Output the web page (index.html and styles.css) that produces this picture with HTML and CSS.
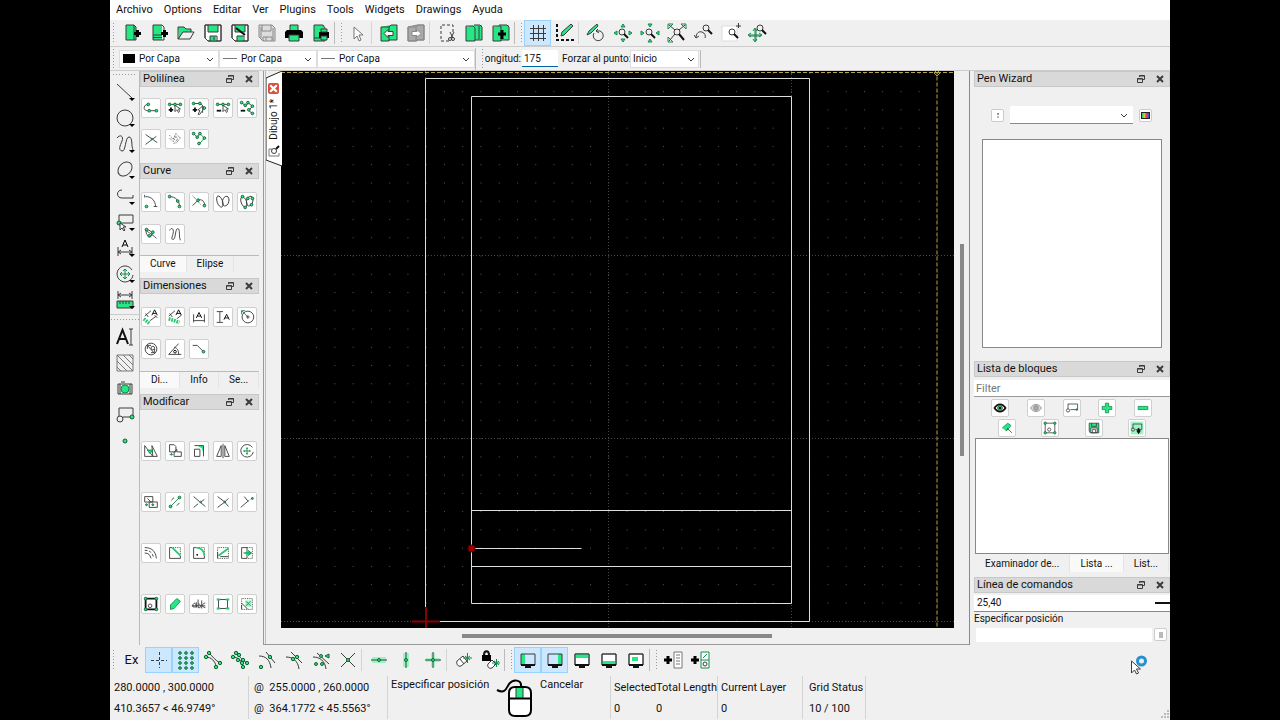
FILE: index.html
```html
<!DOCTYPE html>
<html lang="es">
<head>
<meta charset="utf-8">
<title>LibreCAD - Dibujo 1</title>
<link rel="stylesheet" href="styles.css">
</head>
<body>
<svg class="defs" aria-hidden="true">
  <symbol id="restore" viewBox="0 0 10 10"><path d="M3.500 3V1.500h5v4H7M3.500 2h5"/><path d="M1.500 4.500h5v4h-5zM1.500 5h5"/></symbol>
  <symbol id="close" viewBox="0 0 10 10"><path class="x" d="M2 2l6 6M8 2L2 8"/></symbol>
  <symbol id="chevron" viewBox="0 0 10 10"><path d="M2 4l3 3 3-3"/></symbol>
  <symbol id="monitor" viewBox="0 0 20 20"><path d="M3 4h14v11H3z"/><path class="b" d="M3 15h14M7 17h6"/></symbol>
</svg>
<div class="app">
  <nav class="menubar">
    <button>Archivo</button><button>Options</button><button>Editar</button><button>Ver</button><button>Plugins</button><button>Tools</button><button>Widgets</button><button>Drawings</button><button>Ayuda</button>
  </nav>

  <div class="toolbar">
    <span class="handle"></span>
    <button aria-label="Nuevo"><svg viewBox="0 0 20 20"><path class="g" d="M4 2h8l2 2v13H4z"/><path d="M4 2h8l2 2v13H4zM12 2v15"/><path class="bb" d="M12 10.500h7M15.500 7v7"/></svg></button>
    <button aria-label="Nuevo desde plantilla"><svg viewBox="0 0 20 20"><path class="g" d="M4 2h9v15H4z"/><path d="M4 2h9l2 2v13H4zM4 12h9M4 14.500h9"/><path class="bb" d="M12 10.500h7M15.500 7v7"/></svg></button>
    <button aria-label="Abrir"><svg viewBox="0 0 20 20"><path class="g" d="M2 4h6l2 2h5v3H7l-4 7z"/><path d="M2 16V4h6l2 2h5v3M2 16l5-7h11l-4 7z"/></svg></button>
    <button aria-label="Guardar"><svg viewBox="0 0 20 20"><path class="w" d="M2 2h16v16H5l-3-3z"/><path class="g" d="M5 2h10v7H5zM7 13h6v5H7z"/><path d="M2 2h16v16H5l-3-3zM5 2v7h10V2M7 18v-5h7v5M11 14v3"/></svg></button>
    <button aria-label="Guardar como"><svg viewBox="0 0 20 20"><path class="w" d="M2 2h16v16H5l-3-3z"/><path class="g" d="M5 2h10v7H5zM7 13h6v5H7z"/><path d="M2 2h16v16H5l-3-3zM5 2v7h10V2M7 18v-5h7v5"/><path class="b" d="M6 5l9 7"/></svg></button>
    <button aria-label="Guardar todo"><svg class="dim" viewBox="0 0 20 20"><path class="pale" d="M2 2h13l3 3v13H6l-4-4z"/><path d="M5 2v6h9V2M6 18v-4h9v4M4 4v11M16 5v12M9 14v4"/></svg></button>
    <button aria-label="Imprimir"><svg viewBox="0 0 20 20"><path class="g" d="M6 2h8v6H6z"/><path d="M6 2h8v6H6z"/><path class="k" d="M3 7h14l2 2v6H1V9z"/><path class="g" d="M5 12h10v6H5z"/><path d="M5 12h10v6H5z"/></svg></button>
    <button aria-label="Vista previa de impresión"><svg viewBox="0 0 20 20"><path class="g" d="M3 2h10v16H3z"/><path d="M3 2h9l2 3v13H3zM3 15h7"/><path class="k" d="M8 9h10v6H8z"/><path class="g" d="M10 6h6v3h-6zM10 13h6v4h-6z"/><path d="M10 6h6v3h-6zM10 13h6v4h-6z"/></svg></button>
    <span class="handle split"></span>
    <button aria-label="Seleccionar"><svg viewBox="0 0 20 20"><path class="w mid" d="M6 4v12l3-3 2 5 2-1-2-5h4z"/></svg></button>
    <span class="sep"></span>
    <button aria-label="Deshacer"><svg viewBox="0 0 20 20"><path class="g" d="M2 4l9-2h7v15h-7v1H2z"/><path d="M2 4h8v14H2zM10 4l2-2h6v15h-8"/><path class="w" d="M5 10.500l4-4v2h5v4H9v2z"/></svg></button>
    <button aria-label="Rehacer"><svg class="dim" viewBox="0 0 20 20"><path class="gray" d="M2 4l9-2h7v15h-7v1H2z"/><path d="M2 4h8v14H2zM10 4l2-2h6v15h-8"/><path class="w" d="M15 10.500l-4-4v2H6v4h5v2z"/></svg></button>
    <span class="sep"></span>
    <button aria-label="Cortar"><svg viewBox="0 0 20 20"><path class="dash" d="M16 9V2H4v16h8"/><path d="M13 9l3 6M17 9l-3 6"/><circle cx="13" cy="16" r="1.500"/><circle cx="16" cy="16" r="1.500"/></svg></button>
    <button aria-label="Copiar"><svg viewBox="0 0 20 20"><path class="g" d="M2 4l9-2h7v15h-7v1H2z"/><path d="M2 3h7l2 2v13H2zM11 17h7V4l-2-2h-6M15 3v13"/></svg></button>
    <button aria-label="Pegar"><svg viewBox="0 0 20 20"><path class="g" d="M2 4l9-2h7v15h-7v1H2z"/><path d="M2 3h8v15H2zM10 17h8V4l-2-2H8"/><path class="bb" d="M7 11h8M11 7v9"/></svg></button>
    <span class="handle split"></span>
    <button class="on" aria-label="Rejilla"><svg viewBox="0 0 20 20"><path d="M2 5.500h16M2 10.500h16M2 15.500h16M5.500 2v16M10.500 2v16M15.500 2v16"/></svg></button>
    <button aria-label="Modo borrador"><svg viewBox="0 0 20 20"><path class="dash b" d="M2 1v16h17"/><path class="g" d="M6 13l1-4 9-8 2 2-9 9z"/><path d="M6 13l1-4 9-8 2 2-9 9z"/></svg></button>
    <span class="sep"></span>
    <button aria-label="Redibujar"><svg viewBox="0 0 20 20"><path class="g" d="M1 12l2-4 8-7 1 2-7 7z"/><path d="M1 12l2-4 8-7 1 2-7 7zM8 10a5 5 0 1 0 6-2h-4l2-2M10 8l3 2"/></svg></button>
    <button aria-label="Acercar"><svg viewBox="0 0 20 20"><path class="g" d="M8 4l2-3 2 3zM8 16l2 3 2-3zM4 8l-3 2 3 2zM16 8l3 2-3 2z"/><path class="gs" d="M8 4l2-3 2 3zM8 16l2 3 2-3zM4 8l-3 2 3 2zM16 8l3 2-3 2z"/><circle cx="9" cy="9" r="3"/><path class="b" d="M11 11l4 4"/></svg></button>
    <button aria-label="Alejar"><svg viewBox="0 0 20 20"><path class="g" d="M8 1l2 3 2-3zM8 19l2-3 2 3zM1 8l3 2-3 2zM19 8l-3 2 3 2z"/><path class="gs" d="M8 1l2 3 2-3zM8 19l2-3 2 3zM1 8l3 2-3 2zM19 8l-3 2 3 2z"/><circle cx="9" cy="9" r="3"/><path class="b" d="M11 11l4 4"/></svg></button>
    <button aria-label="Zoom automático"><svg viewBox="0 0 20 20"><path class="gs" d="M1 6V1h5zM14 1h5v5zM1 14v5h5z"/><circle cx="10" cy="9" r="3"/><path d="M2 2l6 5M18 2l-6 5M2 18l6-7"/><path class="b" d="M12 11l5 6"/></svg></button>
    <button aria-label="Vista anterior"><svg viewBox="0 0 20 20"><circle cx="12" cy="5" r="3"/><path class="b" d="M14 7l4 4"/><path d="M2 15c0-5 3-7 6-6s4 4 3 6M0 12l2 3 3-2"/></svg></button>
    <button aria-label="Zoom ventana"><svg viewBox="0 0 20 20"><path class="w soft" d="M1 3h15v15H1z"/><circle cx="11" cy="9" r="3"/><path class="b" d="M13 11l4 4"/><path d="M15 3h5M17.500 0v5"/></svg></button>
    <button aria-label="Desplazar"><svg viewBox="0 0 20 20"><path class="gs" d="M7 6v12M1 12h12M5 8l2-3 2 3M5 16l2 3 2-3M3 10l-3 2 3 2M11 10l3 2-3 2M8 6v12M1 13h12"/><circle cx="12" cy="5" r="3"/><path class="b" d="M14 7l4 4"/></svg></button>
  </div>

  <div class="toolbar pens">
    <span class="handle"></span>
    <label class="combo color"><span class="swatch"></span><select aria-label="Color"><option>Por Capa</option></select><svg class="chev"><use href="#chevron"/></svg></label>
    <label class="combo width"><span class="line"></span><select aria-label="Ancho"><option>Por Capa</option></select><svg class="chev"><use href="#chevron"/></svg></label>
    <label class="combo type"><span class="line"></span><select aria-label="Tipo de línea"><option>Por Capa</option></select><svg class="chev"><use href="#chevron"/></svg></label>
    <span class="handle split"></span>
    <label class="clip" for="len"><span>Longitud:</span></label>
    <input id="len" class="len" type="text" value="175">
    <label class="snaplabel" for="snap">Forzar al punto:</label>
    <span class="combo snap"><select id="snap"><option>Inicio</option></select><svg class="chev"><use href="#chevron"/></svg></span>
    <span class="end"></span>
  </div>

  <main class="work">
    <div class="tools">
      <span class="grip"></span>
      <button class="more" aria-label="Línea"><svg viewBox="0 0 20 20"><path d="M2 2l15 14"/></svg></button>
      <button class="more" aria-label="Círculo"><svg viewBox="0 0 20 20"><circle cx="10" cy="10" r="8"/></svg></button>
      <button class="more" aria-label="Curva"><svg viewBox="0 0 20 20"><path d="M2 4c3-4 7-2 5 3s-4 9 0 10 3-14 7-14 2 9 4 13"/></svg></button>
      <button class="more" aria-label="Elipse"><svg viewBox="0 0 20 20"><ellipse cx="10" cy="9" rx="8" ry="6" transform="rotate(-45 10 9)"/></svg></button>
      <button class="more" aria-label="Polilínea"><svg viewBox="0 0 20 20"><path d="M7 4C1 4 1 12 7 12h11V9"/></svg></button>
      <button class="more" aria-label="Selección"><svg viewBox="0 0 20 20"><path d="M4 3h14v8H4z"/><circle class="n" cx="4" cy="11" r="2"/><path class="w" d="M5 11v7l2-2 2 3 1-1-2-3h3z"/></svg></button>
      <button class="more" aria-label="Acotar"><svg viewBox="0 0 20 20"><path d="M3 9v9M17 9v9M3 14h14M6 12l-3 2 3 2M14 12l3 2-3 2"/><path class="a" d="M7 9l3-7 3 7M8 7h4"/></svg></button>
      <button class="more" aria-label="Modificar"><svg viewBox="0 0 20 20"><path d="M17 6a8 8 0 1 0 1 5"/><path class="gs" d="M10 5v10M5 10h10M8 7l2-2 2 2M8 13l2 2 2-2M7 8l-2 2 2 2M13 8l2 2-2 2"/></svg></button>
      <button class="more" aria-label="Medir"><svg viewBox="0 0 20 20"><path d="M3 1v8M17 1v8M3 5h14M6 3L3 5l3 2M14 3l3 2-3 2"/><path class="g" d="M2 11h16v7H2z"/><path d="M2 11h16v7H2zM5 11v3M8 11v3M11 11v3M14 11v3"/></svg></button>
      <span class="grip cut"></span>
      <button aria-label="Texto"><svg viewBox="0 0 20 20"><path class="b" d="M2 17L7.500 3 13 17M4 12h7"/><path d="M14 2h4M16 2v16M14 18h4"/></svg></button>
      <button aria-label="Sombreado"><svg viewBox="0 0 20 20"><path class="mid" d="M2 2h16v16H2zM2 2l16 16M2 8l10 10M2 14l4 4M8 2l10 10M14 2l4 4"/></svg></button>
      <button aria-label="Imagen"><svg viewBox="0 0 20 20"><path d="M3 5h14v10H3zM5 5v10M15 5v10M6 3h4"/><circle class="g" cx="10" cy="10" r="4"/><circle class="gs" cx="10" cy="10" r="4"/></svg></button>
      <button aria-label="Bloque"><svg viewBox="0 0 20 20"><path d="M4 11V3h14v9H8"/><circle cx="5" cy="14" r="3"/><circle class="n" cx="17" cy="12" r="2"/></svg></button>
      <button aria-label="Punto"><svg viewBox="0 0 20 20"><circle class="n" cx="10" cy="10" r="2"/></svg></button>
    </div>

    <aside class="dock left">
      <section class="poly">
        <header><h2>Polilínea</h2><button aria-label="Flotar"><svg><use href="#restore"/></svg></button><button aria-label="Cerrar"><svg><use href="#close"/></svg></button></header>
        <div class="pad">
          <button aria-label="Crear"><svg viewBox="0 0 20 20"><path d="M7 6c-6 0-6 7-1 7h9"/><circle class="n" cx="7" cy="6" r="1.500"/><circle class="n" cx="8" cy="13" r="1.500"/><circle class="n" cx="16" cy="13" r="1.500"/></svg></button>
          <button aria-label="Añadir nodo"><svg viewBox="0 0 20 20"><path d="M4 6h13"/><circle class="n" cx="4" cy="6" r="1.500"/><circle class="n" cx="10" cy="6" r="1.500"/><circle class="n" cx="16" cy="6" r="1.500"/><path class="b" d="M3 12h5M5.500 9.500v5"/><path class="w" d="M10 7v7l2-2 2 3 1-1-1-3h2z"/></svg></button>
          <button aria-label="Agregar nodo"><svg viewBox="0 0 20 20"><path d="M4 5h8l4 5-4 5"/><circle class="n" cx="4" cy="5" r="1.500"/><circle class="n" cx="11" cy="5" r="1.500"/><circle class="n" cx="16" cy="10" r="1.500"/><path class="b" d="M3 12h5M5.500 9.500v5"/><path class="w" d="M14 8l-5 4 2 1-2 4h2l2-3 1 1z"/></svg></button>
          <button aria-label="Borrar nodo"><svg viewBox="0 0 20 20"><path d="M4 6h13"/><circle class="n" cx="4" cy="6" r="1.500"/><circle class="n" cx="10" cy="6" r="1.500"/><circle class="n" cx="16" cy="6" r="1.500"/><path class="b" d="M3 13h5"/><path class="w" d="M10 7v7l2-2 2 3 1-1-1-3h2z"/></svg></button>
          <button aria-label="Borrar entre nodos"><svg viewBox="0 0 20 20"><path d="M4 4l5 4 2-4 5 4-4 5 4 3"/><circle class="n" cx="4" cy="4" r="1.500"/><circle class="n" cx="8" cy="7" r="1.500"/><circle class="n" cx="11" cy="4" r="1.500"/><circle class="n" cx="16" cy="8" r="1.500"/><circle class="n" cx="12" cy="12" r="1.500"/><circle class="n" cx="16" cy="16" r="1.500"/><path class="b" d="M3 13h5"/></svg></button>
          <button aria-label="Recortar segmentos"><svg viewBox="0 0 20 20"><path d="M4 5l13 9M4 16l12-9"/><circle class="gs" cx="11" cy="10" r="1"/></svg></button>
          <button aria-label="Equidistante"><svg viewBox="0 0 20 20"><path class="dot" d="M4 6l4 4 3-6 5 5-5 6M4 9l4 4 3-6 2 3-5 6"/></svg></button>
          <button aria-label="Desde segmentos"><svg viewBox="0 0 20 20"><path class="gs" d="M4 4l4 4 3-4 5 5-6 7"/><circle class="n" cx="4" cy="4" r="1.500"/><circle class="n" cx="8" cy="8" r="1.500"/><circle class="n" cx="11" cy="4" r="1.500"/><circle class="n" cx="16" cy="9" r="1.500"/><circle class="n" cx="10" cy="15" r="1.500"/></svg></button>
        </div>
      </section>
      <section class="curve">
        <header><h2>Curve</h2><button aria-label="Flotar"><svg><use href="#restore"/></svg></button><button aria-label="Cerrar"><svg><use href="#close"/></svg></button></header>
        <div class="pad">
          <button aria-label="Arco"><svg viewBox="0 0 20 20"><path d="M4 4c7 0 11 5 11 11M13 15h4M3 2v3"/><circle class="n" cx="5" cy="15" r="1.500"/></svg></button>
          <button aria-label="Arco 3 puntos"><svg viewBox="0 0 20 20"><path d="M4 4c7 0 11 5 11 11"/><circle class="n" cx="4" cy="4" r="1.500"/><circle class="n" cx="13" cy="9" r="1.500"/><circle class="n" cx="15" cy="15" r="1.500"/></svg></button>
          <button aria-label="Arco tangencial"><svg viewBox="0 0 20 20"><path d="M3 14l6-6c4-2 8 2 7 6"/><path class="dot" d="M3 3l9 10"/><circle class="n" cx="9" cy="8" r="1.500"/><circle class="n" cx="16" cy="14" r="1.500"/></svg></button>
          <button aria-label="Spline"><svg viewBox="0 0 20 20"><ellipse cx="6.500" cy="9.500" rx="3" ry="6.500" transform="rotate(-20 6.500 9.500)"/><ellipse cx="13" cy="9" rx="3.500" ry="5.500" transform="rotate(15 13 9)"/></svg></button>
          <button aria-label="Spline por puntos"><svg viewBox="0 0 20 20"><ellipse cx="6.500" cy="10" rx="3" ry="6" transform="rotate(-20 6.500 10)"/><ellipse cx="13" cy="9" rx="3.500" ry="5.500" transform="rotate(15 13 9)"/><circle class="n" cx="5" cy="4" r="1.500"/><circle class="n" cx="11" cy="6" r="1.500"/><circle class="n" cx="16" cy="6" r="1.500"/><circle class="n" cx="15" cy="13" r="1.500"/><circle class="n" cx="8" cy="16" r="1.500"/></svg></button>
          <button aria-label="Mano alzada"><svg viewBox="0 0 20 20"><path d="M4 5c1 9 6 10 7 6s-4-6-7-6 8 5 12 10"/><circle class="n" cx="5" cy="5" r="1.500"/><circle class="n" cx="12" cy="8" r="1.500"/><circle class="n" cx="8" cy="12" r="1.500"/></svg></button>
          <button aria-label="Línea libre"><svg viewBox="0 0 20 20"><path d="M4 6c2-4 5-2 4 3s-3 7 0 7 2-12 5-12 1 9 3 13"/></svg></button>
        </div>
        <div class="tabs"><button class="sel">Curve</button><button>Elipse</button></div>
      </section>
      <section class="dims">
        <header><h2>Dimensiones</h2><button aria-label="Flotar"><svg><use href="#restore"/></svg></button><button aria-label="Cerrar"><svg><use href="#close"/></svg></button></header>
        <div class="pad">
          <button aria-label="Alineada"><svg viewBox="0 0 20 20"><path class="ruler" d="M2 12l6 5"/><path d="M3 9l7-6M4 6l3 4M9 14l7-5M14 8l3 3"/><path class="a" d="M11 8l3-6 3 6M12 6h4"/></svg></button>
          <button aria-label="Lineal"><svg viewBox="0 0 20 20"><path class="ruler" d="M3 12l12 4"/><path d="M3 9l7-6M4 6l3 4M12 12l5-4"/><path class="a" d="M11 8l3-6 3 6M12 6h4"/></svg></button>
          <button aria-label="Horizontal"><svg viewBox="0 0 20 20"><path d="M4 7v9M16 7v9M4 14h12"/><path class="a" d="M7 11l3-6 3 6M8 9h4"/></svg></button>
          <button aria-label="Vertical"><svg viewBox="0 0 20 20"><path d="M3 4h7M3 16h7M6.500 4v12"/><path class="a" d="M11 13l3-6 3 6M12 11h4"/></svg></button>
          <button aria-label="Radial"><svg viewBox="0 0 20 20"><circle cx="11" cy="10" r="6.500"/><path class="gs" d="M4 3l7 7M4 7V3h4"/><path d="M11 8v4M9 10h4"/></svg></button>
          <button aria-label="Diametral"><svg viewBox="0 0 20 20"><circle cx="10" cy="10" r="6.500"/><path d="M6 6l8 9M6 10V6h4M10 14h4v-4"/><circle cx="12" cy="9" r="2"/></svg></button>
          <button aria-label="Angular"><svg viewBox="0 0 20 20"><path d="M3 16h14M3 16L14 4M9 8c4 1 5 4 5 8"/><circle class="a" cx="10" cy="13" r="1.500"/></svg></button>
          <button aria-label="Directriz"><svg viewBox="0 0 20 20"><path d="M3 6h5l7 7"/><circle class="n" cx="15" cy="13" r="1.500"/></svg></button>
        </div>
        <div class="tabs"><button class="sel">Di...</button><button>Info</button><button>Se...</button></div>
      </section>
      <section class="modify">
        <header><h2>Modificar</h2><button aria-label="Flotar"><svg><use href="#restore"/></svg></button><button aria-label="Cerrar"><svg><use href="#close"/></svg></button></header>
        <div class="pad">
          <button aria-label="Mover"><svg viewBox="0 0 20 20"><path d="M3 4v12h9zM11 4l6 12h-5z"/><path class="g" d="M6 9h6l-3 4z"/><path class="gs" d="M6 9h6l-3 4z"/></svg></button>
          <button aria-label="Copiar"><svg viewBox="0 0 20 20"><path d="M4 3h5l2 2v6H4zM9 15v-4l3-3v3h5v5H9z"/><path class="gs" d="M6 12v3M4 14h4"/></svg></button>
          <button aria-label="Escalar"><svg viewBox="0 0 20 20"><path class="g" d="M8 4h7v9l-2-6z"/><path d="M5 4h10v12M5 8h6v8H5z"/></svg></button>
          <button aria-label="Reflejar"><svg viewBox="0 0 20 20"><path d="M8 4v12H3zM12 4v12h5zM10 2v16"/></svg></button>
          <button aria-label="Girar"><svg viewBox="0 0 20 20"><path d="M16 6a7 7 0 1 0 1 5"/><path class="gs" d="M10 6v8M6 10h8M9 7h2M9 13h2M7 9v2M13 9v2"/></svg></button>
          <button aria-label="Mover y girar"><svg viewBox="0 0 20 20"><path d="M3 4h9v6H3zM8 10h9v6H8zM6 6l4 4"/><circle class="n" cx="5" cy="13" r="1"/><circle class="n" cx="12" cy="13" r="1"/></svg></button>
          <button aria-label="Girar dos"><svg viewBox="0 0 20 20"><path class="gs" d="M5 15l10-10"/><circle class="n" cx="5" cy="15" r="1.500"/><circle class="n" cx="15" cy="5" r="1.500"/><path d="M6 8l3-3M12 14l3-3"/></svg></button>
          <button aria-label="Recortar"><svg viewBox="0 0 20 20"><path d="M4 4l13 11M4 16l5-4M11 11l5-4"/><circle class="gs" cx="12" cy="10" r="1"/></svg></button>
          <button aria-label="Recortar dos"><svg viewBox="0 0 20 20"><path d="M4 4l8 6M4 16l8-6M12 10l4-4M12 10l4 5"/><circle class="n" cx="12" cy="10" r="1"/></svg></button>
          <button aria-label="Alargar"><svg viewBox="0 0 20 20"><path d="M3 16l7-6M7 4l4 5"/><path class="dash" d="M10 10l7-5"/><circle class="n" cx="16" cy="6" r="1"/></svg></button>
          <button aria-label="Desfase"><svg viewBox="0 0 20 20"><path d="M3 4c8 0 12 4 13 12M3 10c4 0 6 2 7 6"/><path class="dash" d="M3 7c6 0 9 3 10 9"/></svg></button>
          <button aria-label="Bisel"><svg viewBox="0 0 20 20"><path d="M4 4v12h12v-3M4 4h3"/><path class="dot" d="M8 4h8v8"/><path class="thick" d="M7 4l9 9"/></svg></button>
          <button aria-label="Redondeo"><svg viewBox="0 0 20 20"><path d="M4 4v12h12v-3M4 4h3"/><path class="dot" d="M8 4h8v8"/><path class="thick" d="M7 4c5 0 9 4 9 9"/><circle class="k" cx="8" cy="12" r="1"/></svg></button>
          <button aria-label="Dividir"><svg viewBox="0 0 20 20"><path class="dot" d="M4 16V4h12v12z"/><path class="thick" d="M5 13l4-3 7-5"/><path d="M4 16V9M7 14h9"/></svg></button>
          <button aria-label="Estirar"><svg viewBox="0 0 20 20"><path d="M10 4H4v12h6z"/><path class="dot" d="M10 4h6v12h-6"/><path class="g" d="M7 10l4-3 4 3-4 3z"/><path class="gs" d="M6 10h9M11 7l4 3-4 3"/></svg></button>
          <button aria-label="Propiedades"><svg viewBox="0 0 20 20"><path class="b" d="M4 4h12v12H4z"/><circle cx="9" cy="12" r="2"/><circle class="n" cx="4" cy="4" r="1.500"/><circle class="n" cx="16" cy="4" r="1.500"/><circle class="n" cx="4" cy="16" r="1.500"/><circle class="n" cx="16" cy="16" r="1.500"/></svg></button>
          <button aria-label="Atributos"><svg viewBox="0 0 20 20"><path class="g" d="M5 11l7-7 4 3-7 8-4 1z"/><path class="gs" d="M5 11l7-7 4 3-7 8-4 1z"/></svg></button>
          <button aria-label="Explotar texto"><svg viewBox="0 0 20 20"><path d="M3 13c0-5 4-5 4 0-3 1-4 0-4-1M7 8v6M9 5v9c4 1 4-4 0-4M17 9c-4 0-4 5 0 5M2 12h15M13 6v9"/></svg></button>
          <button aria-label="Explotar"><svg viewBox="0 0 20 20"><path d="M5 5h10v10H5z"/><path class="thick" d="M3 5h4M13 5h4M3 15h4M13 15h4"/></svg></button>
          <button aria-label="Borrar"><svg viewBox="0 0 20 20"><path class="gl" d="M8 6h7v7H8z"/><path class="dot" d="M4 4h12v12H4z"/><path class="gs" d="M9 7l5 5M14 7l-5 5"/><path d="M4 9l7 7M4 16v-5"/></svg></button>
        </div>
      </section>
    </aside>

    <div class="mdi">
      <div class="doctabs">
        <svg class="tabshape" viewBox="0 0 16 95"><path d="M16 0L0 7v82l16 6"/></svg>
        <button class="closetab" aria-label="Cerrar dibujo"><svg><use href="#close"/></svg></button>
        <span class="docname">Dibujo 1*</span>
        <svg class="docicon" viewBox="0 0 12 12"><path class="mid" d="M4 4H1v7h10V8"/><circle cx="6" cy="6" r="2.500"/><path class="b" d="M8 4l3-3"/></svg>
      </div>
      <div class="viewport">
        <svg class="canvas" viewBox="281 71 673 557" preserveAspectRatio="xMinYMin slice">
          <defs><pattern id="grid" x="425.700" y="72.900" width="18.260" height="18.260" patternUnits="userSpaceOnUse"><rect width="1" height="1"/></pattern></defs>
          <rect class="dots" x="281" y="71" width="673" height="557" fill="url(#grid)"/>
          <path class="major" d="M425.500 71v557M608.500 71v557M791.500 71v557M281 255.500h673M281 438.500h673M281 621.500h673"/>
          <path class="limit" d="M281 72.500h656v556M937 72.500h17"/>
          <path class="limit solid" d="M937 70l3 3-3 3-3-3z"/>
          <path class="ent" d="M425.500 78.500h384v543h-384zM471.500 96.500h320v507h-320zM471.500 510.500h320M471.500 566.500h320M471.500 548.500h110"/>
          <path class="origin" d="M412 621.500h28M426 607v21"/>
          <circle class="ref" cx="471.500" cy="548.500" r="3.500"/>
        </svg>
        <div class="vbar"><span></span></div>
        <div class="hbar"><span></span></div>
      </div>
    </div>

    <aside class="dock right">
      <section class="pen">
        <header><h2>Pen Wizard</h2><button aria-label="Flotar"><svg><use href="#restore"/></svg></button><button aria-label="Cerrar"><svg><use href="#close"/></svg></button></header>
        <div class="penrow">
          <button class="tiny" aria-label="Añadir color"><svg viewBox="0 0 10 10"><path class="mid" d="M4 4h2M5 3v2M4 7h2"/></svg></button>
          <span class="combo pencolor"><select aria-label="Color favorito"><option></option></select><svg class="chev"><use href="#chevron"/></svg></span>
          <button class="tiny" aria-label="Elegir color"><span class="rainbow"></span></button>
        </div>
        <div class="list"></div>
      </section>
      <section class="blocks">
        <header><h2>Lista de bloques</h2><button aria-label="Flotar"><svg><use href="#restore"/></svg></button><button aria-label="Cerrar"><svg><use href="#close"/></svg></button></header>
        <input class="filter" type="text" placeholder="Filter" aria-label="Filter">
        <div class="brow">
          <button aria-label="Mostrar todo"><svg viewBox="0 0 20 20"><path class="w b" d="M3 10c4-6 10-6 14 0-4 6-10 6-14 0z"/><circle class="g" cx="10" cy="10" r="3"/><circle cx="10" cy="10" r="3"/><circle class="k" cx="10" cy="10" r="1.500"/></svg></button>
          <button aria-label="Ocultar todo"><svg class="dim" viewBox="0 0 20 20"><path class="pale" d="M3 10c4-6 10-6 14 0-4 6-10 6-14 0z"/><circle class="gray" cx="10" cy="10" r="3"/></svg></button>
          <button aria-label="Crear bloque"><svg viewBox="0 0 20 20"><path d="M5 11V5h12v7H8"/><circle cx="5" cy="13" r="2"/><circle class="n" cx="16" cy="12" r="1"/></svg></button>
          <button aria-label="Añadir bloque"><svg viewBox="0 0 20 20"><path class="g" d="M8 4h4v4h4v4h-4v4H8v-4H4V8h4z"/><path class="gs" d="M8 4h4v4h4v4h-4v4H8v-4H4V8h4z"/></svg></button>
          <button aria-label="Quitar bloque"><svg viewBox="0 0 20 20"><path class="g" d="M4 8h12v4H4z"/><path class="gs" d="M4 8h12v4H4z"/></svg></button>
        </div>
        <div class="brow four">
          <button aria-label="Renombrar"><svg viewBox="0 0 20 20"><path class="g" d="M4 10l7-6 4 3-6 7z"/><path class="gs" d="M4 10l7-6 4 3-6 7"/><path d="M10 10l6 6M9 13l2-2"/></svg></button>
          <button aria-label="Editar bloque"><svg viewBox="0 0 20 20"><path d="M4 4h12v12H4z"/><circle cx="9" cy="12" r="2"/><circle class="n" cx="4" cy="4" r="1.500"/><circle class="n" cx="16" cy="4" r="1.500"/><circle class="n" cx="4" cy="16" r="1.500"/><circle class="n" cx="16" cy="16" r="1.500"/></svg></button>
          <button aria-label="Guardar bloque"><svg viewBox="0 0 20 20"><path class="g" d="M4 4h12v12H4z"/><path class="w" d="M6 10h8v6H6z"/><path d="M4 4h12v12H6l-2-2zM7 4v4h6V4M8 16v-4h4v4"/></svg></button>
          <button aria-label="Insertar bloque"><svg viewBox="0 0 20 20"><path class="gl" d="M2 2h16v16H2z"/><path d="M5 11V5h11v7H8"/><circle cx="5" cy="12" r="2"/><path class="b" d="M12 10v6M10 13l2 3 2-3"/></svg></button>
        </div>
        <div class="list"></div>
        <div class="tabs"><button>Examinador de...</button><button class="sel">Lista ...</button><button>List...</button></div>
      </section>
      <section class="cmd">
        <header><h2>Línea de comandos</h2><button aria-label="Flotar"><svg><use href="#restore"/></svg></button><button aria-label="Cerrar"><svg><use href="#close"/></svg></button></header>
        <output class="history">25,40<span class="strike"></span></output>
        <label for="cmd">Especificar posición</label>
        <div class="cmdrow"><input id="cmd" type="text"><button class="tiny" aria-label="Opciones"><svg viewBox="0 0 10 10"><path class="mid" d="M3 3h4M3 5h4M3 7h4"/></svg></button></div>
      </section>
    </aside>
  </main>

  <div class="toolbar snapbar">
    <span class="handle"></span>
    <button class="ex">Ex</button>
    <button class="on" aria-label="Forzar libre"><svg viewBox="0 0 20 20"><path class="dash" d="M2 10.500h16M10.500 2v16"/></svg></button>
    <button class="on" aria-label="Forzar a rejilla"><svg viewBox="0 0 20 20"><g class="n"><circle cx="4" cy="3" r="1.300"/><circle cx="10" cy="3" r="1.300"/><circle cx="16" cy="3" r="1.300"/><circle cx="4" cy="8" r="1.300"/><circle cx="10" cy="8" r="1.300"/><circle cx="16" cy="8" r="1.300"/><circle cx="4" cy="13" r="1.300"/><circle cx="10" cy="13" r="1.300"/><circle cx="16" cy="13" r="1.300"/><circle cx="4" cy="18" r="1.300"/><circle cx="10" cy="18" r="1.300"/><circle cx="16" cy="18" r="1.300"/></g></svg></button>
    <button aria-label="Extremos"><svg viewBox="0 0 20 20"><path d="M3 7c5 0 9 4 10 9M6 3c4 4 6 7 11 10"/><circle class="n" cx="3" cy="7" r="1.700"/><circle class="n" cx="6" cy="3" r="1.700"/><circle class="n" cx="13" cy="17" r="1.700"/><circle class="n" cx="17" cy="13" r="1.700"/></svg></button>
    <button aria-label="En entidad"><svg viewBox="0 0 20 20"><path d="M3 7c5 0 9 4 10 9M6 3c4 4 6 7 11 10"/><circle class="n" cx="3" cy="7" r="1.700"/><circle class="n" cx="6" cy="3" r="1.700"/><circle class="n" cx="9" cy="5" r="1.700"/><circle class="n" cx="8" cy="10" r="1.700"/><circle class="n" cx="13" cy="10" r="1.700"/><circle class="n" cx="12" cy="13" r="1.700"/><circle class="n" cx="13" cy="17" r="1.700"/><circle class="n" cx="17" cy="13" r="1.700"/></svg></button>
    <button aria-label="Centro"><svg viewBox="0 0 20 20"><path d="M2 6c7 0 11 4 12 12M9 2l9 11"/><circle class="n" cx="13" cy="7" r="1.700"/><circle class="n" cx="4" cy="17" r="1.700"/></svg></button>
    <button aria-label="Punto medio"><svg viewBox="0 0 20 20"><path d="M2 7c7 0 12 4 13 12M7 2l11 11"/><circle class="n" cx="13" cy="7" r="1.700"/><circle class="n" cx="9" cy="9" r="1.700"/></svg></button>
    <button aria-label="Distancia"><svg viewBox="0 0 20 20"><path d="M2 7c7 0 12 4 13 12M6 3l12 11"/><circle class="n" cx="10" cy="6" r="1.500"/><circle class="n" cx="5" cy="14" r="1.500"/><circle class="n" cx="11" cy="14" r="1.500"/><path class="n" d="M14 6l4-2v4z"/></svg></button>
    <button aria-label="Intersección"><svg viewBox="0 0 20 20"><path d="M3 3l14 14M3 17L17 3"/><circle class="n" cx="10" cy="10" r="1.500"/></svg></button>
    <span class="sep"></span>
    <button aria-label="Restringir horizontal"><svg viewBox="0 0 20 20"><path class="gl" d="M3 7h14v6H3z"/><path d="M2 10h16"/><circle class="n" cx="10" cy="10" r="1.500"/></svg></button>
    <button aria-label="Restringir vertical"><svg viewBox="0 0 20 20"><path class="gl" d="M7 3h6v14H7z"/><path d="M10 2v16"/><circle class="n" cx="10" cy="10" r="1.500"/></svg></button>
    <button aria-label="Restringir ortogonal"><svg viewBox="0 0 20 20"><path class="gl" d="M8 3h4v5h5v4h-5v5H8v-5H3V8h5z"/><path d="M10 2v16M2 10h16"/><circle class="n" cx="10" cy="10" r="1.500"/></svg></button>
    <span class="sep"></span>
    <button aria-label="Cero relativo"><svg viewBox="0 0 20 20"><path class="w" d="M3 11l6-5 4 5-6 5c-3 1-5-2-4-5zM6 9l4 5"/><path class="gs" d="M9 8h9M13.500 3v10M11 6l5 4M16 6l-5 4"/></svg></button>
    <button aria-label="Bloquear cero relativo"><svg viewBox="0 0 20 20"><path class="k" d="M1 5h9v6H1z"/><path class="b" d="M3 5c0-5 5-5 5 0"/><path class="w" d="M7 14l4-4 4 4-4 4c-3 1-5-1-4-4z"/><path class="gs" d="M15.500 9v8M11 13h8M13 11l5 4M18 11l-5 4"/></svg></button>
    <span class="handle split"></span>
    <button class="on" aria-label="Panel izquierdo"><svg viewBox="0 0 20 20"><path class="g" d="M3 4h4v11H3z"/><use href="#monitor"/></svg></button>
    <button class="on" aria-label="Panel derecho"><svg viewBox="0 0 20 20"><path class="g" d="M13 4h4v11h-4z"/><use href="#monitor"/></svg></button>
    <button aria-label="Panel superior"><svg viewBox="0 0 20 20"><path class="w" d="M3 4h14v11H3z"/><path class="g" d="M3 4h14v4H3z"/><use href="#monitor"/></svg></button>
    <button aria-label="Panel inferior"><svg viewBox="0 0 20 20"><path class="w" d="M3 4h14v11H3z"/><path class="g" d="M3 11h14v4H3z"/><use href="#monitor"/></svg></button>
    <button aria-label="Panel flotante"><svg viewBox="0 0 20 20"><path class="w" d="M3 4h14v11H3z"/><path class="g" d="M6 7h6v4H6z"/><use href="#monitor"/></svg></button>
    <span class="handle split"></span>
    <button aria-label="Añadir menú"><svg viewBox="0 0 20 20"><path class="bb" d="M1 10h8M5 6v8"/><path class="w mid" d="M11 2h8v16h-8zM13 5h4M13 8h4M13 11h4M13 14h4"/></svg></button>
    <button aria-label="Añadir barra"><svg viewBox="0 0 20 20"><path class="bb" d="M1 10h8M5 6v8"/><path class="w gs" d="M11 2h8v16h-8zM11 10h8M13 8l4-4"/><circle cx="15" cy="14" r="2"/></svg></button>
  </div>

  <footer class="status">
    <div class="cell abs"><span>280.0000 , 300.0000</span><span>410.3657 &lt; 46.9749°</span></div>
    <div class="cell rel"><span>@&nbsp; 255.0000 , 260.0000</span><span>@&nbsp; 364.1772 &lt; 45.5563°</span></div>
    <div class="cell mouse"><span class="left-action">Especificar posición</span><svg viewBox="0 0 38 40"><path class="bb thin" d="M1 12c8 4 9-1 12-6 4-5 13-5 12 3"/><path class="w bb thin" d="M13 15c0-4 2-6 6-6h10c4 0 6 2 6 6v17c0 4-2 6-6 6H19c-4 0-6-2-6-6z"/><path class="g" d="M20 10h7v10h-7z"/><path class="bb thin" d="M13 20.500h22"/><path d="M20 10v10M27 10v10"/></svg><span>Cancelar</span></div>
    <div class="cell selc"><span>Selected</span><span>0</span></div>
    <div class="cell total"><span>Total Length</span><span>0</span></div>
    <div class="cell layer"><span>Current Layer</span><span>0</span></div>
    <div class="cell gridst"><span>Grid Status</span><span>10 / 100</span></div>
    <svg class="sizegrip" viewBox="0 0 10 10"><path d="M7 1h2v2H7zM4 4h2v2H4zM7 4h2v2H7zM1 7h2v2H1zM4 7h2v2H4zM7 7h2v2H7z"/></svg>
  </footer>
  <svg class="pointer" viewBox="0 0 18 20"><path class="w" d="M1.500 6v12l3-3 2 4 2-1-2-4h4z"/><circle cx="11.500" cy="6" r="4"/></svg>
</div>
</body>
</html>
```
FILE: styles.css
```css
* { box-sizing: border-box; }
body {
  margin: 0;
  padding: 0 110px;
  background: #000;
  color: #111;
  font: 11px/14px Roboto, "Open Sans", sans-serif;
}
button, input, select, output { font: inherit; color: inherit; }
button { border: 0; padding: 0; background: none; }
svg { fill: none; stroke: #3b3b3b; stroke-width: 1; display: block; }
.defs { position: absolute; width: 0; height: 0; }
.g { fill: #25e884; stroke: none; }
.gl { fill: #9df5c6; stroke: none; }
.gs { stroke: #138a4c; }
.k { fill: #000; stroke: none; }
.w { fill: #fff; }
.gray { fill: #aaa; }
.pale { fill: #ddd; }
.mid { stroke: #777; }
.soft { stroke: #ddd; }
.dim { stroke: #888; }
.n { fill: #3fd98a; stroke: #08672f; }
.a { stroke: #000; }
.b { stroke: #111; stroke-width: 2; }
.x { stroke-width: 2; }
.bb { stroke: #000; stroke-width: 3; }
.thin { stroke-width: 2; }
.thick { stroke: #25c870; stroke-width: 2; }
.ruler { stroke: #25c870; stroke-width: 4; stroke-dasharray: 2 1; }
.dash { stroke-dasharray: 3 2; }
.dot { stroke-dasharray: 1 1; }

.app {
  position: relative;
  display: flex;
  flex-direction: column;
  min-height: 100vh;
  background: #f0f0f0;
}
.menubar {
  display: flex;
  gap: 11px;
  height: 20px;
  padding: 0 6px;
  background: #fff;
}
.toolbar {
  display: flex;
  align-items: center;
  height: 27px;
  border-bottom: 1px solid #ccc;
}
.toolbar > button { width: 27px; height: 26px; display: grid; place-items: center; flex: none; }
.toolbar > button svg { width: 20px; height: 20px; }
.toolbar > .on { background: #cce8ff; border: 1px solid #99d1ff; }
.handle {
  width: 8px;
  height: 22px;
  flex: none;
  background: radial-gradient(#999 1px, transparent 1px) 2px 0 / 3px 3px repeat-y;
}
.handle.split { width: 10px; background-position: 5px 0; border-left: 1px solid #bbb; }
.sep { width: 4px; height: 22px; border-left: 1px solid #d4d4d4; flex: none; }

.pens { height: 24px; font-size: 10px; }
.combo {
  display: flex;
  align-items: center;
  height: 18px;
  padding: 0 4px;
  gap: 4px;
  background: #fff;
  border: 1px solid #ddd;
}
.combo select { flex: 1; min-width: 0; appearance: none; border: 0; padding: 0; background: none; outline: 0; }
.chev { width: 10px; height: 10px; flex: none; }
.swatch { width: 12px; height: 9px; background: #000; }
.line { width: 14px; height: 1px; background: #777; }
.color { width: 100px; margin-left: 1px; padding: 0 3px; }
.width { width: 98px; padding: 0 3px; }
.type { width: 158px; padding: 0 3px; }
.clip { display: flex; justify-content: flex-end; width: 36px; overflow: hidden; white-space: nowrap; }
.len { width: 36px; height: 17px; margin: 0 4px 0 1px; padding: 0 2px; border: 0; border-bottom: 1px solid #0067a0; background: #fff; }
.snaplabel { width: 68px; white-space: nowrap; }
.snap { width: 69px; padding: 0 2px; }
.end { height: 18px; border-right: 1px solid #bbb; width: 2px; }

.work { display: flex; flex: 1; min-height: 0; }
.tools { width: 30px; border-right: 1px solid #bbb; padding-top: 2px; }
.grip { display: block; height: 6px; margin: 0 2px; background: radial-gradient(#999 1px, transparent 1px) 0 0 / 3px 3px repeat-x; }
.grip.cut { height: 10px; margin: 1px 0 0; border-top: 1px solid #ccc; background-position: 0 3px; }
.tools button { position: relative; display: grid; place-items: center; width: 29px; height: 26px; }
.tools svg { width: 20px; height: 20px; }
.tools .more::after {
  content: "";
  position: absolute;
  right: 4px;
  bottom: 4px;
  border: 3px solid transparent;
  border-top-color: #000;
  border-bottom: 0;
}

.dock { display: flex; flex-direction: column; }
.dock.left { width: 124px; border-right: 1px solid #999; }
.dock.left section { height: 92px; padding-right: 4px; display: flex; flex-direction: column; }
.dock.left .curve { height: 115px; }
.dock.left .dims { height: 116px; }
.dock.left .modify { height: auto; }
header {
  display: flex;
  align-items: center;
  height: 16px;
  padding-left: 2px;
  background: #d9d9d9;
  border: 1px solid #c8c8c8;
  flex: none;
}
header h2 { flex: 1; margin: 0; font: inherit; white-space: nowrap; }
header button { width: 19px; display: grid; place-items: center; }
header svg { width: 10px; height: 10px; }
.pad { flex: 1; display: grid; grid-template-columns: repeat(5, 20px); grid-auto-rows: 20px; gap: 12px 4px; padding: 13px 1px 0; }
.pad button, .brow button { display: grid; place-items: center; background: #fff; border: 1px solid #d0d0d0; border-radius: 2px; }
.pad svg { width: 18px; height: 18px; }
.poly .pad { row-gap: 11px; padding-top: 11px; }
.modify .pad { row-gap: 31px; padding-top: 31px; }
.tabs { display: flex; height: 17px; font-size: 10px; margin-bottom: 6px; border-top: 1px solid #bbb; }
.tabs button { flex: 1 1 auto; padding: 0 4px; border-right: 1px solid #e4e4e4; }
.tabs .sel { background: #f9f9f9; }
.curve .tabs button { flex: 0 0 auto; padding: 0 10px; }
.dims .tabs button { flex: 1 1 0; }

.mdi { flex: 1; min-width: 0; display: flex; padding-left: 1px; border-right: 1px solid #888; border-bottom: 1px solid #999; }
.doctabs { position: relative; display: flex; flex-direction: column; align-items: center; width: 16px; padding-top: 12px; border-left: 1px solid #bbb; }
.tabshape { position: absolute; left: 0; top: 0; width: 16px; height: 95px; }
.tabshape path { fill: #fff; stroke: #222; }
.closetab { position: relative; width: 11px; height: 11px; background: #d9503f; border-radius: 2px; }
.closetab svg { width: 11px; height: 11px; stroke: #fff; }
.docname { position: relative; writing-mode: vertical-rl; transform: rotate(180deg); font-size: 10px; line-height: 14px; margin: 5px 0; white-space: nowrap; }
.docicon { position: relative; width: 12px; height: 12px; }
.viewport { flex: 1; min-width: 0; display: grid; grid-template: minmax(0, 1fr) 16px / minmax(0, 1fr) 15px; }
.canvas { width: 100%; height: 100%; background: #000; }
.dots { stroke: none; }
#grid rect { fill: #5a5a5a; stroke: none; }
.major { stroke: #444; stroke-dasharray: 1 2; }
.limit { stroke: #b5a24a; stroke-dasharray: 4 2; }
.limit.solid { stroke-dasharray: none; }
.ent { stroke: #ddd; }
.origin { stroke: #8a0008; stroke-width: 2; }
.ref { fill: #900; stroke: #500; }
.vbar { padding: 173px 5px 172px 6px; }
.vbar span, .hbar span { display: block; width: 100%; height: 100%; background: #888; }
.hbar { padding: 6px 182px 6px 181px; }

.dock.right { width: 200px; padding: 0 0 0 4px; }
.right .list { border: 1px solid #888; background: #fff; }
.pen { height: 290px; display: flex; flex-direction: column; }
.penrow { display: flex; align-items: center; gap: 6px; padding: 19px 18px 15px 17px; }
.tiny { width: 13px; height: 13px; flex: none; display: grid; place-items: center; background: #fff; border: 1px solid #ccc; border-radius: 2px; }
.tiny svg { width: 10px; height: 10px; }
.pencolor { flex: 1; border: 0; border-bottom: 1px solid #888; }
.rainbow { width: 9px; height: 7px; border: 1px solid #222; background: linear-gradient(90deg, #2b6, #dc3, #d36, #36c); }
.pen .list { flex: 1; margin: 0 8px 13px 8px; }
.blocks { flex: 1; display: flex; flex-direction: column; }
.filter { width: 100%; height: 17px; margin: 3px 0 2px; padding: 0 2px; border: 0; border-bottom: 1px solid #999; background: #fff; }
.filter::placeholder { color: #777; opacity: 1; }
.brow { display: flex; justify-content: space-between; padding: 0 18px 2px 17px; }
.brow.four { padding: 0 24px 1px 24px; }
.brow button { width: 18px; height: 18px; }
.brow svg { width: 16px; height: 16px; }
.blocks .list { flex: 1; margin: 0 1px; }
.blocks .tabs { margin: 1px 1px 5px; border: 0; }
.cmd { height: 68px; }
.cmd label { display: block; font-size: 10px; line-height: 14px; }
.history { display: flex; align-items: center; justify-content: space-between; height: 17px; margin-top: 2px; padding-left: 3px; background: #fff; border-bottom: 1px solid #888; font-size: 10px; line-height: 14px; }
.strike { width: 15px; height: 2px; background: #111; }
.cmdrow { display: flex; gap: 2px; padding: 2px 3px 0 2px; }
.cmdrow input { flex: 1; min-width: 0; height: 14px; border: 0; background: #fff; }

.snapbar { height: 29px; border: 0; }
.snapbar .ex { font-size: 13px; }
.status { display: flex; height: 47px; padding: 2px 0 2px 4px; }
.cell { display: flex; flex-direction: column; gap: 7px; padding-top: 5px; border-right: 1px solid #d4d4d4; white-space: nowrap; }
.abs { width: 135px; }
.rel { width: 139px; padding-left: 5px; }
.mouse { width: 223px; flex-direction: row; gap: 0; padding: 2px 0 0 3px; }
.mouse svg { width: 38px; height: 40px; margin-right: 6px; }
.left-action { width: 105px; }
.selc { width: 45px; padding-left: 3px; border: 0; }
.total { width: 62px; }
.layer { width: 85px; padding-left: 3px; }
.gridst { width: 63px; padding-left: 6px; }
.sizegrip { width: 10px; height: 10px; margin: auto 0 0 auto; stroke: none; fill: #bbb; }
.pointer { position: absolute; right: 22px; bottom: 46px; width: 18px; height: 20px; }
.pointer circle { stroke: #2a8fce; stroke-width: 3; fill: #dff1fb; }
```
